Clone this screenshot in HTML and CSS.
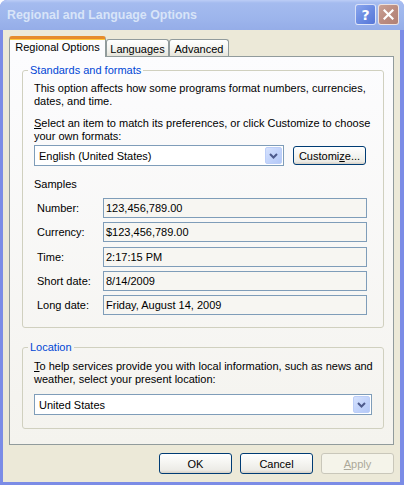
FILE: index.html
```html
<!DOCTYPE html>
<html lang="en">
<head>
    <meta charset="UTF-8">
    <title>Regional and Language Options</title>
    <link rel="stylesheet" href="styles.css">
</head>
<body>
    <div class="window">
        <div class="titlebar">
            <span class="title">Regional and Language Options</span>
            <div class="caption-buttons">
                <span class="cap-btn help">?</span>
                <span class="cap-btn close">
                    <svg width="11" height="11" viewBox="0 0 11 11"><path d="M1.5 1.5 L9.5 9.5 M9.5 1.5 L1.5 9.5" stroke="#fff" stroke-width="2.2" stroke-linecap="square"/></svg>
                </span>
            </div>
        </div>

        <div class="client">
            <div class="tabs">
                <div class="tab active">Regional Options</div>
                <div class="tab">Languages</div>
                <div class="tab">Advanced</div>
            </div>

            <div class="panel">
                <fieldset class="group group-formats">
                    <legend>Standards and formats</legend>
                    <p class="intro">This option affects how some programs format numbers, currencies,<br>dates, and time.</p>
                    <p class="select-text"><u>S</u>elect an item to match its preferences, or click Customize to choose<br>your own formats:</p>
                    <div class="format-row">
                        <div class="combo combo-short">
                            <span class="combo-value">English (United States)</span>
                            <span class="combo-arrow">
                                <svg width="9" height="6" viewBox="0 0 9 6"><path d="M1 1 L4.5 4.5 L8 1" fill="none" stroke="#4d5a8c" stroke-width="2"/></svg>
                            </span>
                        </div>
                        <button class="btn btn-customize">Customi<u>z</u>e...</button>
                    </div>

                    <div class="samples-title">Samples</div>
                    <div class="samples">
                        <div class="sample-row"><span class="sample-label">Number:</span><span class="sample-box">123,456,789.00</span></div>
                        <div class="sample-row"><span class="sample-label">Currency:</span><span class="sample-box">$123,456,789.00</span></div>
                        <div class="sample-row"><span class="sample-label">Time:</span><span class="sample-box">2:17:15 PM</span></div>
                        <div class="sample-row"><span class="sample-label">Short date:</span><span class="sample-box">8/14/2009</span></div>
                        <div class="sample-row"><span class="sample-label">Long date:</span><span class="sample-box">Friday, August 14, 2009</span></div>
                    </div>
                </fieldset>

                <fieldset class="group group-location">
                    <legend>Location</legend>
                    <p class="location-text"><u>T</u>o help services provide you with local information, such as news and<br>weather, select your present location:</p>
                    <div class="combo combo-wide">
                        <span class="combo-value">United States</span>
                        <span class="combo-arrow">
                            <svg width="9" height="6" viewBox="0 0 9 6"><path d="M1 1 L4.5 4.5 L8 1" fill="none" stroke="#4d5a8c" stroke-width="2"/></svg>
                        </span>
                    </div>
                </fieldset>
            </div>

            <div class="dialog-buttons">
                <button class="btn">OK</button>
                <button class="btn">Cancel</button>
                <button class="btn disabled"><u>A</u>pply</button>
            </div>
        </div>
    </div>
</body>
</html>
```

FILE: styles.css
```css
/* XP style dialog, inactive window */

body {
    margin: 0;
    background: #fff;
    font-family: 'Liberation Sans', Arial, sans-serif;
    font-size: 11px;
    color: #000;
}

.window {
    width: 404px;
    height: 485px;
    display: flex;
    flex-direction: column;
    background: #7b8ce6;
    border-radius: 7px 7px 0 0;
    overflow: hidden;
}

.titlebar {
    height: 30px;
    flex: none;
    display: flex;
    justify-content: space-between;
    align-items: flex-start;
    padding: 0 5px 0 7px;
    background: linear-gradient(to bottom, #bccdf6 0, #a4bbef 3px, #9db5ec 60%, #95ade8 100%);
}

.title {
    margin-top: 8px;
    font-size: 12.4px;
    font-weight: bold;
    color: #d8e4f8;
}

.caption-buttons {
    display: flex;
    gap: 2px;
    margin-top: 4px;
}

.cap-btn {
    width: 19px;
    height: 19px;
    border: 1px solid rgba(255, 255, 255, 0.75);
    border-radius: 3px;
    display: flex;
    align-items: center;
    justify-content: center;
}

.help {
    background: linear-gradient(135deg, #8aa6ee 0%, #6c8ce2 50%, #5676d8 100%);
    color: #fff;
    font-family: 'DejaVu Sans', sans-serif;
    font-size: 14px;
    font-weight: bold;
}

.close {
    background: linear-gradient(135deg, #caa296 0%, #bb8c80 50%, #b08074 100%);
}

.client {
    flex: 1;
    margin: 0 4px 3px 3px;
    background: #ece9d8;
    display: flex;
    flex-direction: column;
}

.tabs {
    display: flex;
    align-items: flex-end;
    height: 20px;
    padding: 6px 0 0 6px;
}

.tab {
    box-sizing: border-box;
    height: 17px;
    border: 1px solid #919b9c;
    border-bottom: none;
    border-radius: 3px 3px 0 0;
    background: linear-gradient(to bottom, #fff, #f3f3ef 60%, #e6e4da);
    display: flex;
    align-items: center;
    justify-content: center;
    padding-top: 1px;
}

.tab:nth-child(2) {
    width: 63px;
}

.tab:nth-child(3) {
    width: 60px;
}

.tab.active {
    position: relative;
    z-index: 1;
    width: 97px;
    height: 21px;
    margin-bottom: -1px;
    border-top: 3px solid #e68b2c;
    box-shadow: inset 0 1px 0 #ffc83c;
    background: #fcfcfe;
    padding-top: 0;
    padding-bottom: 2px;
}

.panel {
    box-sizing: border-box;
    height: 389px;
    margin: 0 6px;
    padding: 0 9px 0 12px;
    border: 1px solid #919b9c;
    background: linear-gradient(to bottom, #fcfcfe, #f4f3ee);
}

.group {
    margin: 0;
    min-width: 0;
    padding: 0 11px 12px;
    border: 1px solid #d0d0bf;
    border-radius: 3px;
}

.group legend {
    padding: 0 2px;
    margin-left: -6px;
    line-height: 14px;
    color: #0046d5;
}

.group-formats {
    margin-top: 6px;
}

.group-location {
    margin-top: 12px;
    padding-bottom: 13px;
}

p {
    margin: 0;
    line-height: 13px;
    white-space: nowrap;
}

.intro {
    margin-top: 5px;
}

.select-text {
    margin-top: 9px;
}

.location-text {
    margin-top: 6px;
}

.format-row {
    display: flex;
    align-items: center;
    margin-top: 2px;
}

.combo {
    box-sizing: border-box;
    height: 21px;
    border: 1px solid #7f9db9;
    background: #fff;
    display: flex;
    align-items: center;
    justify-content: space-between;
    padding: 1px;
}

.combo-short {
    width: 250px;
}

.combo-wide {
    margin-top: 8px;
}

.combo-value {
    padding-left: 3px;
}

.combo-arrow {
    box-sizing: border-box;
    width: 17px;
    height: 17px;
    border: 1px solid #bccef8;
    border-radius: 2px;
    background: linear-gradient(135deg, #d6e2fd 0%, #c3d4fb 50%, #b4c8f7 100%);
    display: flex;
    align-items: center;
    justify-content: center;
}

.btn {
    box-sizing: border-box;
    width: 73px;
    height: 21px;
    padding: 0;
    font-family: inherit;
    font-size: 11px;
    color: #000;
    border: 1px solid #003c74;
    border-radius: 3px;
    background: linear-gradient(to bottom, #fff 0%, #f4f4f0 50%, #ecebe6 85%, #d6d0c5 100%);
}

.btn-customize {
    height: 19px;
    margin-left: 9px;
}

.btn.disabled {
    color: #aca899;
    border-color: #c9c7ba;
    background: #f5f4ea;
}

.samples-title {
    margin-top: 12px;
    line-height: 13px;
}

.samples {
    display: flex;
    flex-direction: column;
    gap: 4.25px;
    margin-top: 7px;
}

.sample-row {
    display: flex;
    align-items: center;
}

.sample-label {
    width: 66px;
    padding-left: 3px;
}

.sample-box {
    box-sizing: border-box;
    width: 264px;
    height: 20px;
    border: 1px solid #7f9db9;
    padding-left: 2px;
    display: flex;
    align-items: center;
    background: #f7f6f2;
}

.dialog-buttons {
    display: flex;
    justify-content: flex-end;
    gap: 8px;
    margin-top: 8px;
    padding-right: 6px;
}
```
